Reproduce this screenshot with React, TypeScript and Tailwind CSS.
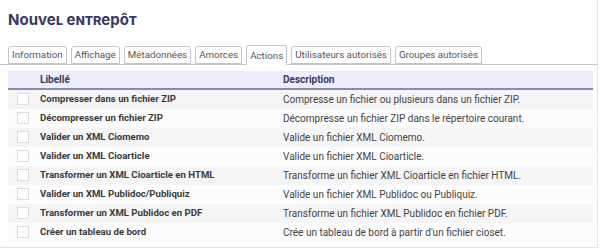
const tabs = ["Information", "Affichage", "Métadonnées", "Amorces", "Actions", "Utilisateurs autorisés", "Groupes autorisés"];

const rows = [
  ["Compresser dans un fichier ZIP", "Compresse un fichier ou plusieurs dans un fichier ZIP."],
  ["Décompresser un fichier ZIP", "Décompresse un fichier ZIP dans le répertoire courant."],
  ["Valider un XML Ciomemo", "Valide un fichier XML Ciomemo."],
  ["Valider un XML Cioarticle", "Valide un fichier XML Cioarticle."],
  ["Transformer un XML Cioarticle en HTML", "Transforme un fichier XML Cioarticle en fichier HTML."],
  ["Valider un XML Publidoc/Publiquiz", "Valide un fichier XML Publidoc ou Publiquiz."],
  ["Transformer un XML Publidoc en PDF", "Transforme un fichier XML Publidoc en fichier PDF."],
  ["Créer un tableau de bord", "Crée un tableau de bord à partir d'un fichier cioset."],
];

export default function App() {
  return (
    <div className="h-[249px] w-[600px] bg-white">
      <div className="h-[248px] w-[598px] border-r border-b border-[#e4e4e8] bg-white">
        <h1 className="px-2 pt-[11px] text-[15px] leading-[18px] font-bold text-[#3a3960] [font-family:Inter,sans-serif] [font-variant:small-caps]">
          Nouvel entrepôt
        </h1>
        <div className="mt-[16px] flex items-end gap-1 border-b border-[#c4c4cc] px-2 [font-family:Roboto,sans-serif]">
          {tabs.map((t) => (
            <div
              key={t}
              className={`rounded-t-[3px] border border-[#c4c4cc] px-[3px] text-[9.75px] leading-[14px] text-[#555] ${
                t === "Actions" ? "-mb-px h-[20px] border-b-white bg-white pt-[3px]" : "h-[18px] pt-[1px]"
              }`}
            >
              {t}
            </div>
          ))}
        </div>
        <div className="mx-2 mt-[6px] w-[585px] [font-family:Roboto,sans-serif] text-[10px]">
          <div className="flex h-[19px] items-center border-b-2 border-[#8b8ba6] bg-[#ededfd] font-bold text-[#3a3960]">
            <div className="w-[275px] pl-[32px]">Libellé</div>
            <div>Description</div>
          </div>
          {rows.map(([a, b], i) => (
            <div key={a} className={`flex h-[19px] items-center ${i % 2 === 0 ? "bg-[#f5f5f5]" : "bg-[#fcfcfc]"}`}>
              <div className="flex w-[275px] items-center">
                <span className="ml-[9px] mr-[11px] h-[12px] w-[12px] border border-[#dcdcdc] bg-white" />
                <span className="text-[9.6px] font-bold text-[#3a3a3a]">{a}</span>
              </div>
              <div className="text-[#444]">{b}</div>
            </div>
          ))}
        </div>
      </div>
    </div>
  );
}
